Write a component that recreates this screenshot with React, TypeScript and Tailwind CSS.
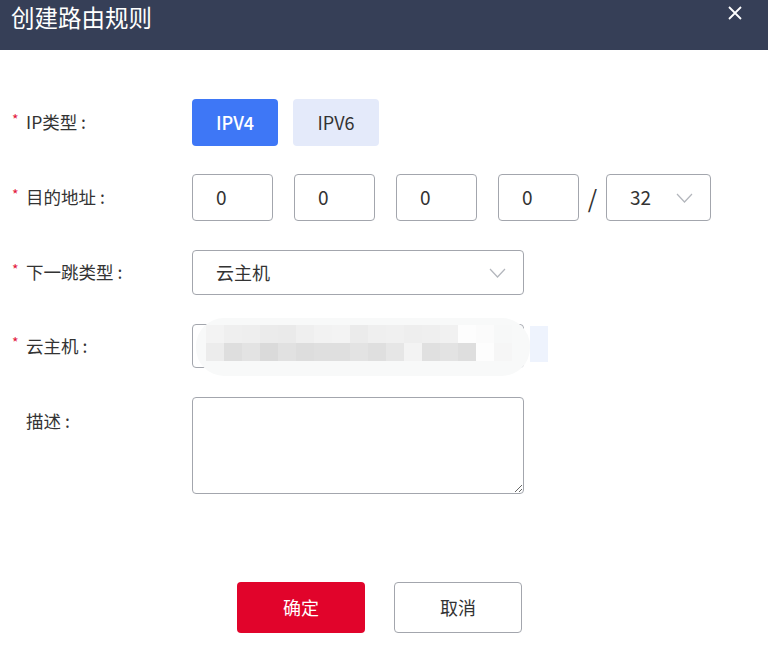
const font = { fontFamily: '"Noto Sans CJK SC", "Noto Sans", sans-serif' };

function Chevron() {
  return (
    <svg width="17" height="10" viewBox="0 0 17 10" fill="none">
      <path d="M1 1L8.5 9L16 1" stroke="#b3b6bc" strokeWidth="1.2" />
    </svg>
  );
}

function Label({ text, required = true }: { text: string; required?: boolean }) {
  return (
    <div className="w-[192px] shrink-0 flex items-center pl-[12px] text-[17.5px] text-[#333]">
      <span className="w-[14px] -mt-[8px] text-[#e3173c] text-[14px] leading-none">{required ? "*" : ""}</span>
      <span>{text}</span>
    </div>
  );
}

function IpBox({ value }: { value: string }) {
  return (
    <div className="w-[81px] h-[47px] border border-[#a3a6ad] rounded-[4px] flex items-center pl-[23px] text-[19px] text-[#333]">
      {value}
    </div>
  );
}

export default function App() {
  return (
    <div className="w-[768px] h-[656px] bg-white overflow-hidden" style={font}>
      <header className="h-[50px] bg-[#363f57] flex items-start justify-between">
        <h3 className="pl-[11px] text-[23.5px] leading-[35px] text-white">创建路由规则</h3>
        <svg className="mt-[6px] mr-[26px]" width="14" height="14" viewBox="0 0 14 14">
          <path d="M1 1L13 13M13 1L1 13" stroke="white" strokeWidth="1.8" />
        </svg>
      </header>

      <div className="pt-[49px]">
        <div className="flex h-[47px]">
          <Label text="IP类型 :" />
          <button className="w-[86px] h-[47px] rounded-[4px] bg-[#3e77f6] text-white text-[18px] font-medium">
            IPV4
          </button>
          <button className="ml-[15px] w-[86px] h-[47px] rounded-[4px] bg-[#e4eafa] text-[#333] text-[18px]">
            IPV6
          </button>
        </div>

        <div className="flex h-[47px] mt-[28px]">
          <Label text="目的地址 :" />
          <div className="flex gap-[21px]">
            <IpBox value="0" />
            <IpBox value="0" />
            <IpBox value="0" />
            <IpBox value="0" />
          </div>
          <span className="w-[27px] flex items-center justify-center text-[24px] text-[#333]">/</span>
          <div className="w-[105px] h-[47px] border border-[#a3a6ad] rounded-[4px] flex items-center justify-between pl-[23px] pr-[17px] text-[19px] text-[#333]">
            32
            <Chevron />
          </div>
        </div>

        <div className="flex h-[45px] mt-[29px]">
          <Label text="下一跳类型 :" />
          <div className="w-[332px] h-[45px] border border-[#a3a6ad] rounded-[4px] flex items-center justify-between pl-[23px] pr-[17px] text-[18px] text-[#333]">
            云主机
            <Chevron />
          </div>
        </div>

        <div className="flex h-[44px] mt-[29px]">
          <Label text="云主机 :" />
          <div className="relative w-[356px] h-[44px]">
            <div className="w-[332px] h-[44px] border border-[#a3a6ad] rounded-[4px]" />
            <div className="absolute left-[4px] top-[-6px] w-[334px] h-[58px] rounded-[28px] bg-[#f8f9f9]" />
            <div className="absolute left-[338px] top-[2px] w-[18px] h-[36px] bg-[#eef3fd]" />
            <div className="absolute left-[14px] top-[1px] grid grid-cols-[repeat(17,18px)] grid-rows-[18px_18px]">
              {[
                "#f3f3f3", "#efefef", "#eeeeee", "#ebebeb", "#eaeaea", "#efefef", "#f2f2f2", "#f3f3f3", "#ebebeb", "#efefef", "#f0f0f0", "#eeeeee", "#efefef", "#f1f1f1", "#fdfdfd", "#fbfbfb", "#f7f8f8",
                "#ececec", "#dedede", "#e3e3e3", "#dadada", "#e1e1e1", "#dddddd", "#dfdfdf", "#dfdfdf", "#e3e3e3", "#dfdfdf", "#e6e6e6", "#f3f3f3", "#e0e0e0", "#e3e3e3", "#dedede", "#fdfdfd", "#f6f6f6",
              ].map((c, i) => (
                <div key={i} style={{ backgroundColor: c }} />
              ))}
            </div>
          </div>
        </div>

        <div className="flex mt-[29px]">
          <div className="w-[192px] shrink-0 pl-[26px] pt-[11px] text-[17.5px] text-[#333]">描述 :</div>
          <textarea className="w-[332px] h-[97px] border border-[#a3a6ad] rounded-[4px] outline-none" />
        </div>

        <div className="flex mt-[88px] pl-[237px] gap-[29px]">
          <button className="w-[128px] h-[51px] rounded-[4px] bg-[#e1042b] text-white text-[18px]">确定</button>
          <button className="w-[128px] h-[51px] rounded-[4px] border border-[#a3a6ad] bg-white text-[#333] text-[18px]">
            取消
          </button>
        </div>
      </div>
    </div>
  );
}
